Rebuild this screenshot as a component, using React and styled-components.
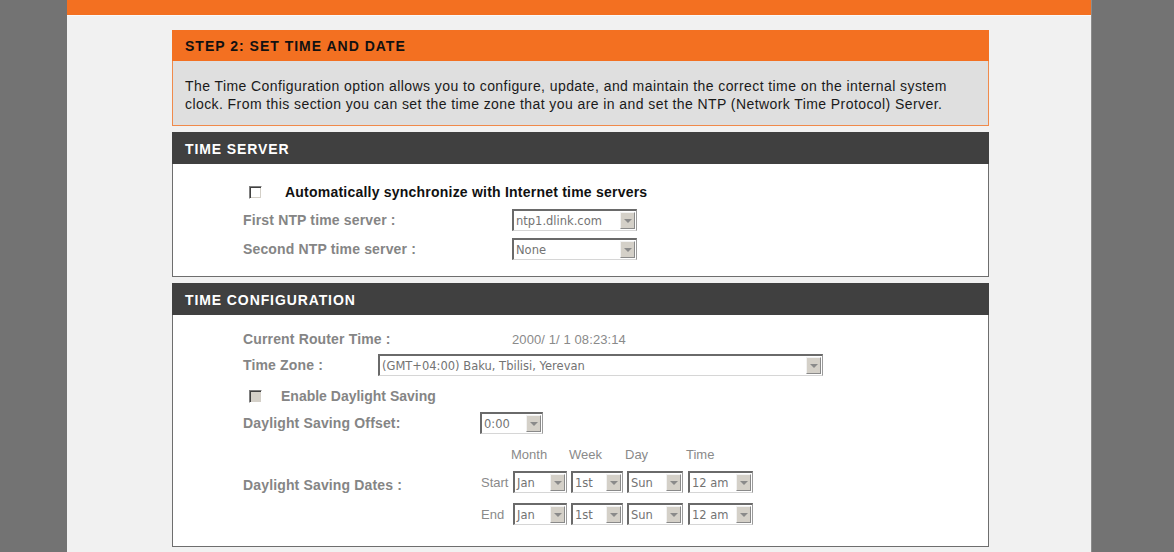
import React from "react";
import styled, { createGlobalStyle } from "styled-components";

const Global = createGlobalStyle`
  html, body { margin: 0; padding: 0; background: #737373; }
  body { font-family: "Liberation Sans", Arial, sans-serif; }
  #root { min-height: 552px; }
`;

const Frame = styled.div`
  margin-left: 67px;
  width: 1024px;
  min-height: 552px;
  background: #f1f1f1;
  border-right: 1px solid #8c8c8c;
`;

const TopBar = styled.div`
  height: 15px;
  background: #f37021;
  border-bottom: 1px solid #f9f9f9;
`;

const Content = styled.div`
  padding: 14px 0 0 105px;
  display: flex;
  flex-direction: column;
  gap: 6px;
  width: 817px;
`;

const StepBox = styled.div`
  display: flex;
  flex-direction: column;
`;

const StepHeader = styled.div`
  height: 31px;
  background: #f37021;
  color: #111;
  font-weight: bold;
  font-size: 14px;
  letter-spacing: 1px;
  display: flex;
  align-items: center;
  padding-left: 13px;
  padding-top: 1px;
  box-sizing: border-box;
`;

const StepText = styled.div`
  background: #dfdfdf;
  border: 1px solid #f08a4b;
  border-top: none;
  padding: 16px 12px 12px 12px;
  font-size: 14px;
  line-height: 18px;
  letter-spacing: 0.42px;
  color: #1a1a1a;
`;

const Box = styled.div`
  border: 1px solid #6e6e6e;
  background: #fff;
  display: flex;
  flex-direction: column;
`;

const BoxHeader = styled.div`
  height: 30px;
  margin: -1px -1px 0 -1px;
  background: #404040;
  color: #fff;
  font-weight: bold;
  font-size: 14px;
  letter-spacing: 0.9px;
  display: flex;
  align-items: center;
  padding-left: 13px;
  padding-top: 2px;
`;

const BoxBody = styled.div`
  padding: ${(p) => p.$pad};
  display: flex;
  flex-direction: column;
  padding-left: 70px;
`;

const Row = styled.div`
  display: flex;
  align-items: center;
  min-height: ${(p) => p.$h || 20}px;
  margin-top: ${(p) => p.$mt || 0}px;
`;

const Label = styled.div`
  width: ${(p) => p.$w}px;
  flex: none;
  font-weight: bold;
  font-size: 14px;
  letter-spacing: 0.15px;
  color: #858585;
  white-space: nowrap;
`;

const Value = styled.div`
  font-size: 13px;
  color: #8a8a8a;
  letter-spacing: 0.1px;
`;

const CheckText = styled.div`
  font-weight: bold;
  font-size: 14px;
  letter-spacing: ${(p) => (p.$disabled ? 0 : 0.22)}px;
  color: ${(p) => (p.$disabled ? "#858585" : "#111")};
  margin-left: ${(p) => p.$gap}px;
  white-space: nowrap;
`;

const Check = styled.span`
  display: inline-block;
  width: 13px;
  height: 13px;
  box-sizing: border-box;
  margin-left: 6px;
  background: ${(p) => (p.$disabled ? "#d4d0c8" : "#fff")};
  border-top: 1px solid #808080;
  border-left: 1px solid #808080;
  border-right: 1px solid #ffffff;
  border-bottom: 1px solid #ffffff;
  box-shadow: inset 1px 1px 0 #404040, inset -1px -1px 0 #d4d0c8;
`;

const SelectBox = styled.div`
  width: ${(p) => p.$w}px;
  height: 22px;
  box-sizing: border-box;
  display: flex;
  align-items: stretch;
  background: #fff;
  border-top: 2px solid #6a6a6a;
  border-left: 2px solid #6a6a6a;
  border-right: 1px solid #9a9a9a;
  border-bottom: 1px solid #d6d6d6;
  font-family: "DejaVu Sans", Verdana, sans-serif;
  font-size: 11.5px;
  color: #737373;
  flex: none;
`;

const SelectText = styled.span`
  flex: 1;
  display: flex;
  align-items: center;
  padding-left: 2px;
  white-space: nowrap;
  overflow: hidden;
`;

const SelectBtn = styled.span`
  width: 15px;
  margin: 1px 1px 1px 0;
  box-sizing: border-box;
  background: #d4d0c8;
  border-top: 1px solid #f2f2f2;
  border-left: 1px solid #f2f2f2;
  border-right: 1px solid #8a8a8a;
  border-bottom: 1px solid #8a8a8a;
  display: flex;
  align-items: center;
  justify-content: center;
  &::after {
    content: "";
    width: 0;
    height: 0;
    border-left: 4px solid transparent;
    border-right: 4px solid transparent;
    border-top: 4px solid #8a8a8a;
  }
`;

const Select = ({ w, value }) => (
  <SelectBox $w={w}>
    <SelectText>{value}</SelectText>
    <SelectBtn />
  </SelectBox>
);

const DatesGrid = styled.div`
  display: grid;
  grid-template-columns: 32px 58px 56px 61px 65px;
  grid-template-rows: 20px 7px 22px 10px 22px;
  align-items: center;
`;

const Cell = styled.div`
  grid-row: ${(p) => p.$row};
  grid-column: ${(p) => p.$col};
  display: flex;
  align-items: center;
`;

const ColHead = styled(Cell)`
  font-size: 13px;
  color: #8a8a8a;
  margin-left: -2px;
`;

const RowTag = styled(Cell)`
  font-size: 13px;
  color: #8a8a8a;
`;

const selects = [
  { w: 54, v: "Jan" },
  { w: 52, v: "1st" },
  { w: 56, v: "Sun" },
  { w: 65, v: "12 am" },
];

const DatesRow = ({ tag, row }) => (
  <>
    <RowTag $row={row} $col={1}>{tag}</RowTag>
    {selects.map((s, i) => (
      <Cell key={s.v} $row={row} $col={i + 2}>
        <Select w={s.w} value={s.v} />
      </Cell>
    ))}
  </>
);

const heads = ["Month", "Week", "Day", "Time"];

export default function App() {
  return (
    <>
      <Global />
      <Frame>
        <TopBar />
        <Content>
          <StepBox>
            <StepHeader>STEP 2: SET TIME AND DATE</StepHeader>
            <StepText>
              The Time Configuration option allows you to configure, update, and maintain the correct time on the internal system
              clock. From this section you can set the time zone that you are in and set the NTP (Network Time Protocol) Server.
            </StepText>
          </StepBox>

          <Box>
            <BoxHeader>TIME SERVER</BoxHeader>
            <BoxBody $pad="18px 0 16px">
              <Row $h={20}>
                <Check />
                <CheckText $gap={23}>Automatically synchronize with Internet time servers</CheckText>
              </Row>
              <Row $h={22} $mt={7}>
                <Label $w={269}>First NTP time server :</Label>
                <Select w={125} value="ntp1.dlink.com" />
              </Row>
              <Row $h={22} $mt={7}>
                <Label $w={269}>Second NTP time server :</Label>
                <Select w={125} value="None" />
              </Row>
            </BoxBody>
          </Box>

          <Box>
            <BoxHeader>TIME CONFIGURATION</BoxHeader>
            <BoxBody $pad="14px 0 21px">
              <Row $h={20}>
                <Label $w={269}>Current Router Time :</Label>
                <Value>2000/ 1/ 1 08:23:14</Value>
              </Row>
              <Row $h={22} $mt={5}>
                <Label $w={135}>Time Zone :</Label>
                <Select w={445} value="(GMT+04:00) Baku, Tbilisi, Yerevan" />
              </Row>
              <Row $h={20} $mt={10}>
                <Check $disabled />
                <CheckText $gap={19} $disabled>Enable Daylight Saving</CheckText>
              </Row>
              <Row $h={22} $mt={6}>
                <Label $w={237}>Daylight Saving Offset:</Label>
                <Select w={63} value="0:00" />
              </Row>
              <Row $mt={10}>
                <Label $w={238}>Daylight Saving Dates :</Label>
                <DatesGrid>
                  {heads.map((h, i) => (
                    <ColHead key={h} $row={1} $col={i + 2}>{h}</ColHead>
                  ))}
                  <DatesRow tag="Start" row={3} />
                  <DatesRow tag="End" row={5} />
                </DatesGrid>
              </Row>
            </BoxBody>
          </Box>
        </Content>
      </Frame>
    </>
  );
}
